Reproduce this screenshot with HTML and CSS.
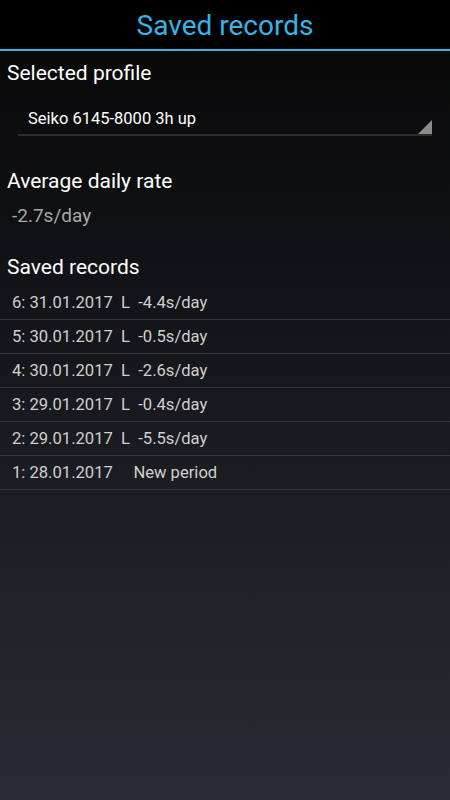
FILE: index.html
```html
<!DOCTYPE html>
<html lang="en">
<head>
    <meta charset="UTF-8">
    <meta name="viewport" content="width=device-width, initial-scale=1.0">
    <title>Saved records</title>
    <link rel="stylesheet" href="styles.css">
</head>
<body>

    <div class="action-bar">
        <h1>Saved records</h1>
    </div>

    <div class="content">
        <h2 class="section-title">Selected profile</h2>
        <div class="spinner">
            <span class="spinner-text">Seiko 6145-8000 3h up</span>
            <span class="spinner-arrow"></span>
        </div>

        <h2 class="section-title">Average daily rate</h2>
        <div class="rate">-2.7s/day</div>

        <h2 class="section-title">Saved records</h2>
        <ul class="records">
            <li>6: 31.01.2017&nbsp; L&nbsp; -4.4s/day</li>
            <li>5: 30.01.2017&nbsp; L&nbsp; -0.5s/day</li>
            <li>4: 30.01.2017&nbsp; L&nbsp; -2.6s/day</li>
            <li>3: 29.01.2017&nbsp; L&nbsp; -0.4s/day</li>
            <li>2: 29.01.2017&nbsp; L&nbsp; -5.5s/day</li>
            <li>1: 28.01.2017&nbsp; &nbsp; &nbsp;New period</li>
        </ul>
    </div>

</body>
</html>
```

FILE: styles.css
```css
html, body {
    height: 100%;
}
body {
    font-family: Roboto, "Noto Sans", sans-serif;
    margin: 0;
    background: linear-gradient(to bottom, #070707 0%, #101114 30%, #1b1d22 60%, #272b33 100%);
    color: #fff;
}
.action-bar {
    height: 49px;
    background-color: #000;
    border-bottom: 2px solid #33b5e5;
    display: flex;
    align-items: center;
    justify-content: center;
}
.action-bar h1 {
    margin: 2px 0 0 0;
    font-size: 28px;
    font-weight: normal;
    color: #33b5e5;
}
.content {
    padding-top: 8px;
}
.section-title {
    margin: 0 0 0 7px;
    font-size: 21px;
    font-weight: normal;
    color: #fff;
    line-height: 28px;
}
.spinner {
    margin: 16px 18px 31px 18px;
    height: 31px;
    border-bottom: 2px solid #2c2c2c;
    position: relative;
    display: flex;
    align-items: center;
}
.spinner-text {
    padding-left: 10px;
    font-size: 16.5px;
    color: #fff;
}
.spinner-arrow {
    position: absolute;
    right: 0;
    bottom: 0;
    width: 0;
    height: 0;
    border-left: 14px solid transparent;
    border-bottom: 14px solid #8a8a8a;
}
.rate {
    margin: 9px 0 25px 12px;
    font-size: 19px;
    color: #a8a8a8;
    line-height: 24px;
}
.records {
    list-style: none;
    margin: 5px 0 0 0;
    padding: 0;
}
.records li {
    height: 33px;
    line-height: 33px;
    padding-left: 12px;
    font-size: 16.6px;
    color: #cfcfcf;
    border-bottom: 1px solid #33363b;
}
```
